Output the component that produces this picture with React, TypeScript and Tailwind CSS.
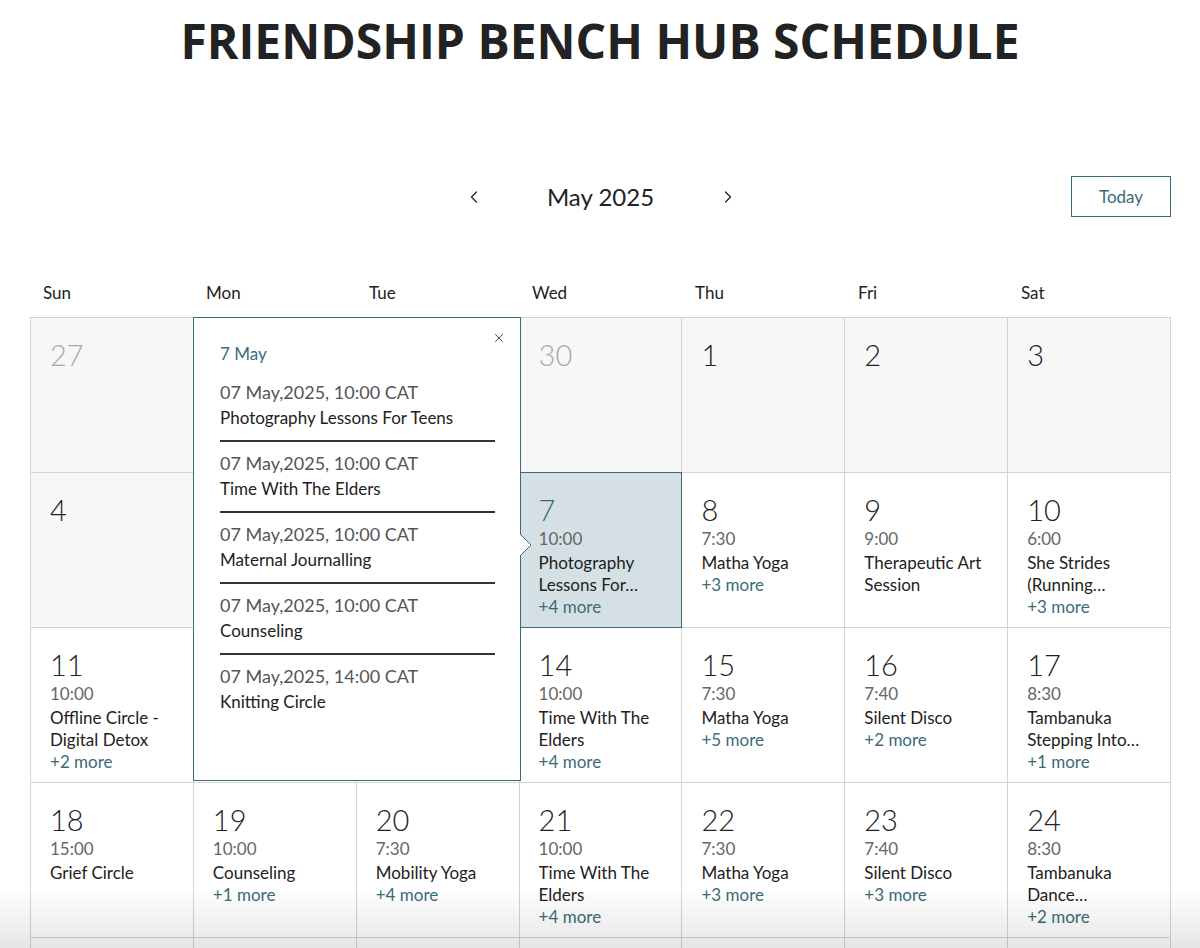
import { ChevronLeft, ChevronRight, X } from "lucide-react";

type Day = {
  n: number;
  muted?: boolean;
  past?: boolean;
  selected?: boolean;
  time?: string;
  title?: string;
  more?: number;
};

const weeks: Day[][] = [
  [
    { n: 27, muted: true, past: true },
    { n: 28, muted: true, past: true },
    { n: 29, muted: true, past: true },
    { n: 30, muted: true, past: true },
    { n: 1, past: true },
    { n: 2, past: true },
    { n: 3, past: true },
  ],
  [
    { n: 4, past: true },
    { n: 5, past: true },
    { n: 6, past: true },
    { n: 7, selected: true, time: "10:00", title: "Photography Lessons For…", more: 4 },
    { n: 8, time: "7:30", title: "Matha Yoga", more: 3 },
    { n: 9, time: "9:00", title: "Therapeutic Art Session" },
    { n: 10, time: "6:00", title: "She Strides (Running…", more: 3 },
  ],
  [
    { n: 11, time: "10:00", title: "Offline Circle - Digital Detox", more: 2 },
    { n: 12 },
    { n: 13 },
    { n: 14, time: "10:00", title: "Time With The Elders", more: 4 },
    { n: 15, time: "7:30", title: "Matha Yoga", more: 5 },
    { n: 16, time: "7:40", title: "Silent Disco", more: 2 },
    { n: 17, time: "8:30", title: "Tambanuka Stepping Into…", more: 1 },
  ],
  [
    { n: 18, time: "15:00", title: "Grief Circle" },
    { n: 19, time: "10:00", title: "Counseling", more: 1 },
    { n: 20, time: "7:30", title: "Mobility Yoga", more: 4 },
    { n: 21, time: "10:00", title: "Time With The Elders", more: 4 },
    { n: 22, time: "7:30", title: "Matha Yoga", more: 3 },
    { n: 23, time: "7:40", title: "Silent Disco", more: 3 },
    { n: 24, time: "8:30", title: "Tambanuka Dance…", more: 2 },
  ],
  [
    { n: 25 },
    { n: 26 },
    { n: 27 },
    { n: 28 },
    { n: 29 },
    { n: 30 },
    { n: 31 },
  ],
];

const popupEvents = [
  { when: "07 May,2025, 10:00 CAT", title: "Photography Lessons For Teens" },
  { when: "07 May,2025, 10:00 CAT", title: "Time With The Elders" },
  { when: "07 May,2025, 10:00 CAT", title: "Maternal Journalling" },
  { when: "07 May,2025, 10:00 CAT", title: "Counseling" },
  { when: "07 May,2025, 14:00 CAT", title: "Knitting Circle" },
];

const dayNames = ["Sun", "Mon", "Tue", "Wed", "Thu", "Fri", "Sat"];

function Cell({ day }: { day: Day }) {
  const bg = day.selected
    ? "bg-[#d5e0e4] outline outline-1 outline-[#3b6b78] relative z-10"
    : day.past
    ? "bg-[#f7f7f7]"
    : "bg-white";
  return (
    <div className={`h-[154px] pl-[19px] pr-3 pt-[19px] ${bg}`}>
      <div
        className={`text-[29px] font-light leading-[36px] ${
          day.muted ? "text-[#a9a9a9]" : day.selected ? "text-[#3b6b78]" : "text-[#222]"
        }`}
      >
        {day.n}
      </div>
      {day.time && <div className="text-[17px] leading-[22px] text-[#666]">{day.time}</div>}
      {day.title && (
        <div className="mt-[2px] text-[17px] leading-[22px] text-[#222] line-clamp-2">{day.title}</div>
      )}
      {day.more && (
        <div className="text-[17px] leading-[22px] text-[#3b6b78]">+{day.more} more</div>
      )}
    </div>
  );
}

export default function App() {
  return (
    <div className="min-h-[948px] bg-white font-['Lato',sans-serif] text-[#222]">
      <h1 className="pt-[10px] text-center font-['Open_Sans',sans-serif] text-[48px] font-bold leading-[62px] text-[#222]">
        FRIENDSHIP BENCH HUB SCHEDULE
      </h1>

      <div className="ml-[30px] mt-[104px] grid w-[1141px] grid-cols-[1fr_auto_1fr] items-center">
        <div />
        <div className="flex items-center gap-[52px]">
          <button className="text-[#222]">
            <ChevronLeft size={20} strokeWidth={1.5} />
          </button>
          <span className="w-[130px] text-center text-[24px] text-[#222]">May 2025</span>
          <button className="text-[#222]">
            <ChevronRight size={20} strokeWidth={1.5} />
          </button>
        </div>
        <div className="flex justify-end">
          <button className="h-[41px] w-[100px] border border-[#3b6b78] text-[17px] text-[#3b6b78]">
            Today
          </button>
        </div>
      </div>

      <div className="ml-[30px] mt-[64px] grid w-[1141px] grid-cols-7">
        {dayNames.map((d) => (
          <div key={d} className="pl-[13px] text-[17px] leading-[24px] text-[#222]">
            {d}
          </div>
        ))}
      </div>

      <div className="relative ml-[30px] mt-[12px] w-[1141px]">
        <div className="grid grid-cols-7 gap-px border border-[#d4d4d4] bg-[#d4d4d4]">
          {weeks.flat().map((day, i) => (
            <Cell key={i} day={day} />
          ))}
        </div>

        <div className="absolute left-[163px] top-0 z-20 h-[464px] w-[328px] border border-[#3b6b78] bg-white pl-[26px] pr-[25px] pt-[24px]">
          <button className="absolute right-[14px] top-[13px] text-[#333]">
            <X size={14} strokeWidth={1.5} />
          </button>
          <div className="text-[17px] leading-[24px] text-[#3b6b78]">7 May</div>
          <div className="mt-[14px]">
            {popupEvents.map((e, i) => (
              <div key={i}>
                <div className="text-[18px] leading-[24px] text-[#555]">{e.when}</div>
                <div className="mt-[2px] text-[17px] leading-[24px] text-[#222]">{e.title}</div>
                {i < popupEvents.length - 1 && (
                  <div className="mb-[9px] mt-[10px] border-t-2 border-[#333]" />
                )}
              </div>
            ))}
          </div>
          <svg
            className="absolute right-[-12px] top-[216px]"
            width="12"
            height="22"
            viewBox="0 0 12 22"
          >
            <polygon points="0,0 11,11 0,22" fill="white" />
            <polyline points="0,0 11,11 0,22" fill="none" stroke="#3b6b78" strokeWidth="1" />
          </svg>
        </div>
      </div>

      <div className="pointer-events-none fixed bottom-0 left-0 right-0 h-[60px] bg-gradient-to-b from-transparent to-black/10" />
    </div>
  );
}
